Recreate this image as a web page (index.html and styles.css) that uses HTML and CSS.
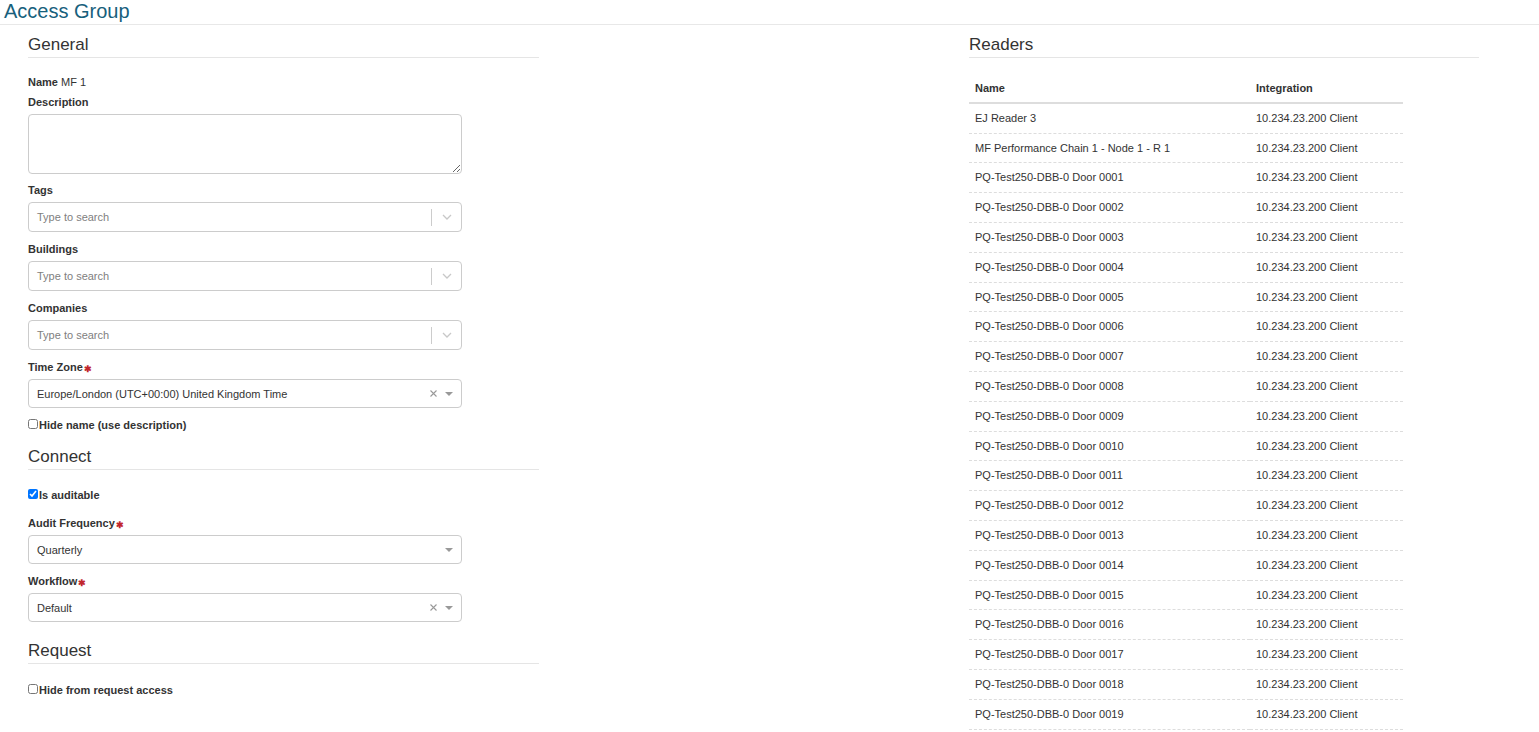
FILE: index.html
```html
<!DOCTYPE html>
<html lang="en">
<head>
  <meta charset="UTF-8" />
  <title>Access Group</title>
  <meta name="viewport" content="width=device-width, initial-scale=1.0" />
  <link rel="stylesheet" href="styles.css">
</head>
<body>

  <h1 class="page-title">Access Group</h1>

  <div class="page">

    <!-- Left: form -->
    <div class="column">
      <h3 class="section-title">General</h3>

      <div class="name-row"><span class="label">Name</span> MF 1</div>

      <label class="label field-label">Description</label>
      <textarea class="text-area"></textarea>

      <label class="label field-label">Tags</label>
      <div class="select">
        <span class="select-value placeholder">Type to search</span>
        <span class="select-sep"></span>
        <span class="select-chevron">
          <svg width="10" height="6" viewBox="0 0 10 6"><path d="M1 1l4 4 4-4" fill="none" stroke="#c8c8c8" stroke-width="1.3"/></svg>
        </span>
      </div>

      <label class="label field-label">Buildings</label>
      <div class="select">
        <span class="select-value placeholder">Type to search</span>
        <span class="select-sep"></span>
        <span class="select-chevron">
          <svg width="10" height="6" viewBox="0 0 10 6"><path d="M1 1l4 4 4-4" fill="none" stroke="#c8c8c8" stroke-width="1.3"/></svg>
        </span>
      </div>

      <label class="label field-label">Companies</label>
      <div class="select">
        <span class="select-value placeholder">Type to search</span>
        <span class="select-sep"></span>
        <span class="select-chevron">
          <svg width="10" height="6" viewBox="0 0 10 6"><path d="M1 1l4 4 4-4" fill="none" stroke="#c8c8c8" stroke-width="1.3"/></svg>
        </span>
      </div>

      <label class="label field-label">Time Zone<span class="required">✱</span></label>
      <div class="select compact">
        <span class="select-value">Europe/London (UTC+00:00) United Kingdom Time</span>
        <span class="select-clear">
          <svg width="7" height="7" viewBox="0 0 7 7"><path d="M0.5 0.5l6 6M6.5 0.5l-6 6" stroke="#999" stroke-width="1.1"/></svg>
        </span>
        <span class="select-caret"></span>
      </div>

      <label class="check-row">
        <input type="checkbox" class="check">
        <span>Hide name (use description)</span>
      </label>

      <h3 class="section-title spaced">Connect</h3>

      <label class="check-row first">
        <input type="checkbox" class="check" checked>
        <span>Is auditable</span>
      </label>

      <label class="label field-label gap-top">Audit Frequency<span class="required">✱</span></label>
      <div class="select compact">
        <span class="select-value">Quarterly</span>
        <span class="select-caret"></span>
      </div>

      <label class="label field-label">Workflow<span class="required">✱</span></label>
      <div class="select compact">
        <span class="select-value">Default</span>
        <span class="select-clear">
          <svg width="7" height="7" viewBox="0 0 7 7"><path d="M0.5 0.5l6 6M6.5 0.5l-6 6" stroke="#999" stroke-width="1.1"/></svg>
        </span>
        <span class="select-caret"></span>
      </div>

      <h3 class="section-title spaced">Request</h3>

      <label class="check-row first last">
        <input type="checkbox" class="check">
        <span>Hide from request access</span>
      </label>
    </div>

    <!-- Right: readers -->
    <div class="column">
      <h3 class="section-title">Readers</h3>

      <table class="readers">
        <thead>
          <tr><th class="col-name">Name</th><th>Integration</th></tr>
        </thead>
        <tbody id="readerRows"></tbody>
      </table>
    </div>

  </div>

  <script>
    const rows = document.getElementById('readerRows');
    const readers = ['EJ Reader 3', 'MF Performance Chain 1 - Node 1 - R 1'];
    for (let i = 1; i <= 19; i++) {
      readers.push('PQ-Test250-DBB-0 Door ' + String(i).padStart(4, '0'));
    }
    rows.innerHTML = readers
      .map(name => `<tr><td>${name}</td><td>10.234.23.200 Client</td></tr>`)
      .join('');
  </script>
</body>
</html>
```

FILE: styles.css
```css
body {
  font-family: 'Liberation Sans', Arial, sans-serif;
  font-size: 11px;
  color: #333;
  margin: 0;
  padding: 0;
  background: #fff;
}

.page-title {
  margin: 0;
  padding-left: 4px;
  font-size: 20px;
  font-weight: normal;
  line-height: 23px;
  padding-bottom: 1px;
  color: #17607c;
  border-bottom: 1px solid #e8e8e8;
}

.page {
  display: grid;
  grid-template-columns: 511px 510px;
  column-gap: 430px;
  padding: 0 28px;
}

.column {
  display: flex;
  flex-direction: column;
  align-items: flex-start;
}

.section-title {
  align-self: stretch;
  margin: 10px 0 0;
  padding-bottom: 2px;
  font-size: 17px;
  font-weight: normal;
  line-height: 20px;
  color: #333;
  border-bottom: 1px solid #e5e5e5;
}

.section-title.spaced {
  margin-top: 14px;
}

.label {
  font-weight: bold;
}

.name-row {
  margin-top: 16px;
  line-height: 16px;
}

.field-label {
  display: block;
  margin-top: 4px;
  margin-bottom: 4px;
  line-height: 16px;
}

.field-label.gap-top {
  margin-top: 12px;
}

.required {
  color: #c1272d;
  font-size: 9px;
  line-height: 0;
  margin-left: 1px;
  position: relative;
  top: 1px;
}

.text-area {
  width: 434px;
  height: 60px;
  box-sizing: border-box;
  border: 1px solid #ccc;
  border-radius: 4px;
  resize: vertical;
  margin: 0 0 4px;
}

.select {
  width: 434px;
  height: 30px;
  box-sizing: border-box;
  border: 1px solid #ccc;
  border-radius: 4px;
  display: flex;
  align-items: center;
  margin-bottom: 5px;
}

.select.compact {
  height: 29px;
}

.select-value {
  flex: 1;
  padding-left: 8px;
  color: #333;
}

.select-value.placeholder {
  color: #808080;
}

.select-sep {
  width: 1px;
  height: 17px;
  background: #ccc;
}

.select-chevron {
  width: 29px;
  display: flex;
  justify-content: center;
}

.select-clear {
  display: flex;
  margin-right: 8px;
}

.select-caret {
  width: 0;
  height: 0;
  border-left: 4px solid transparent;
  border-right: 4px solid transparent;
  border-top: 4px solid #999;
  margin-right: 8px;
}

.check-row {
  display: flex;
  align-items: flex-start;
  margin-top: 4px;
  line-height: 16px;
  font-weight: bold;
}

.check-row.first {
  margin-top: 17px;
}

.check-row.last {
  margin-top: 18px;
}

.check {
  width: 10px;
  height: 10px;
  margin: 2px 1px 0 0;
}

.readers {
  width: 434px;
  margin-top: 16px;
  border-collapse: collapse;
}

.readers th,
.readers td {
  text-align: left;
  padding: 8px 6px;
  line-height: 12.8px;
}

.readers th {
  font-weight: bold;
  padding-bottom: 7px;
  border-bottom: 2px solid #ddd;
}

.readers td {
  border-bottom: 1px dashed #ddd;
}

.readers .col-name {
  width: 269px;
}
```
